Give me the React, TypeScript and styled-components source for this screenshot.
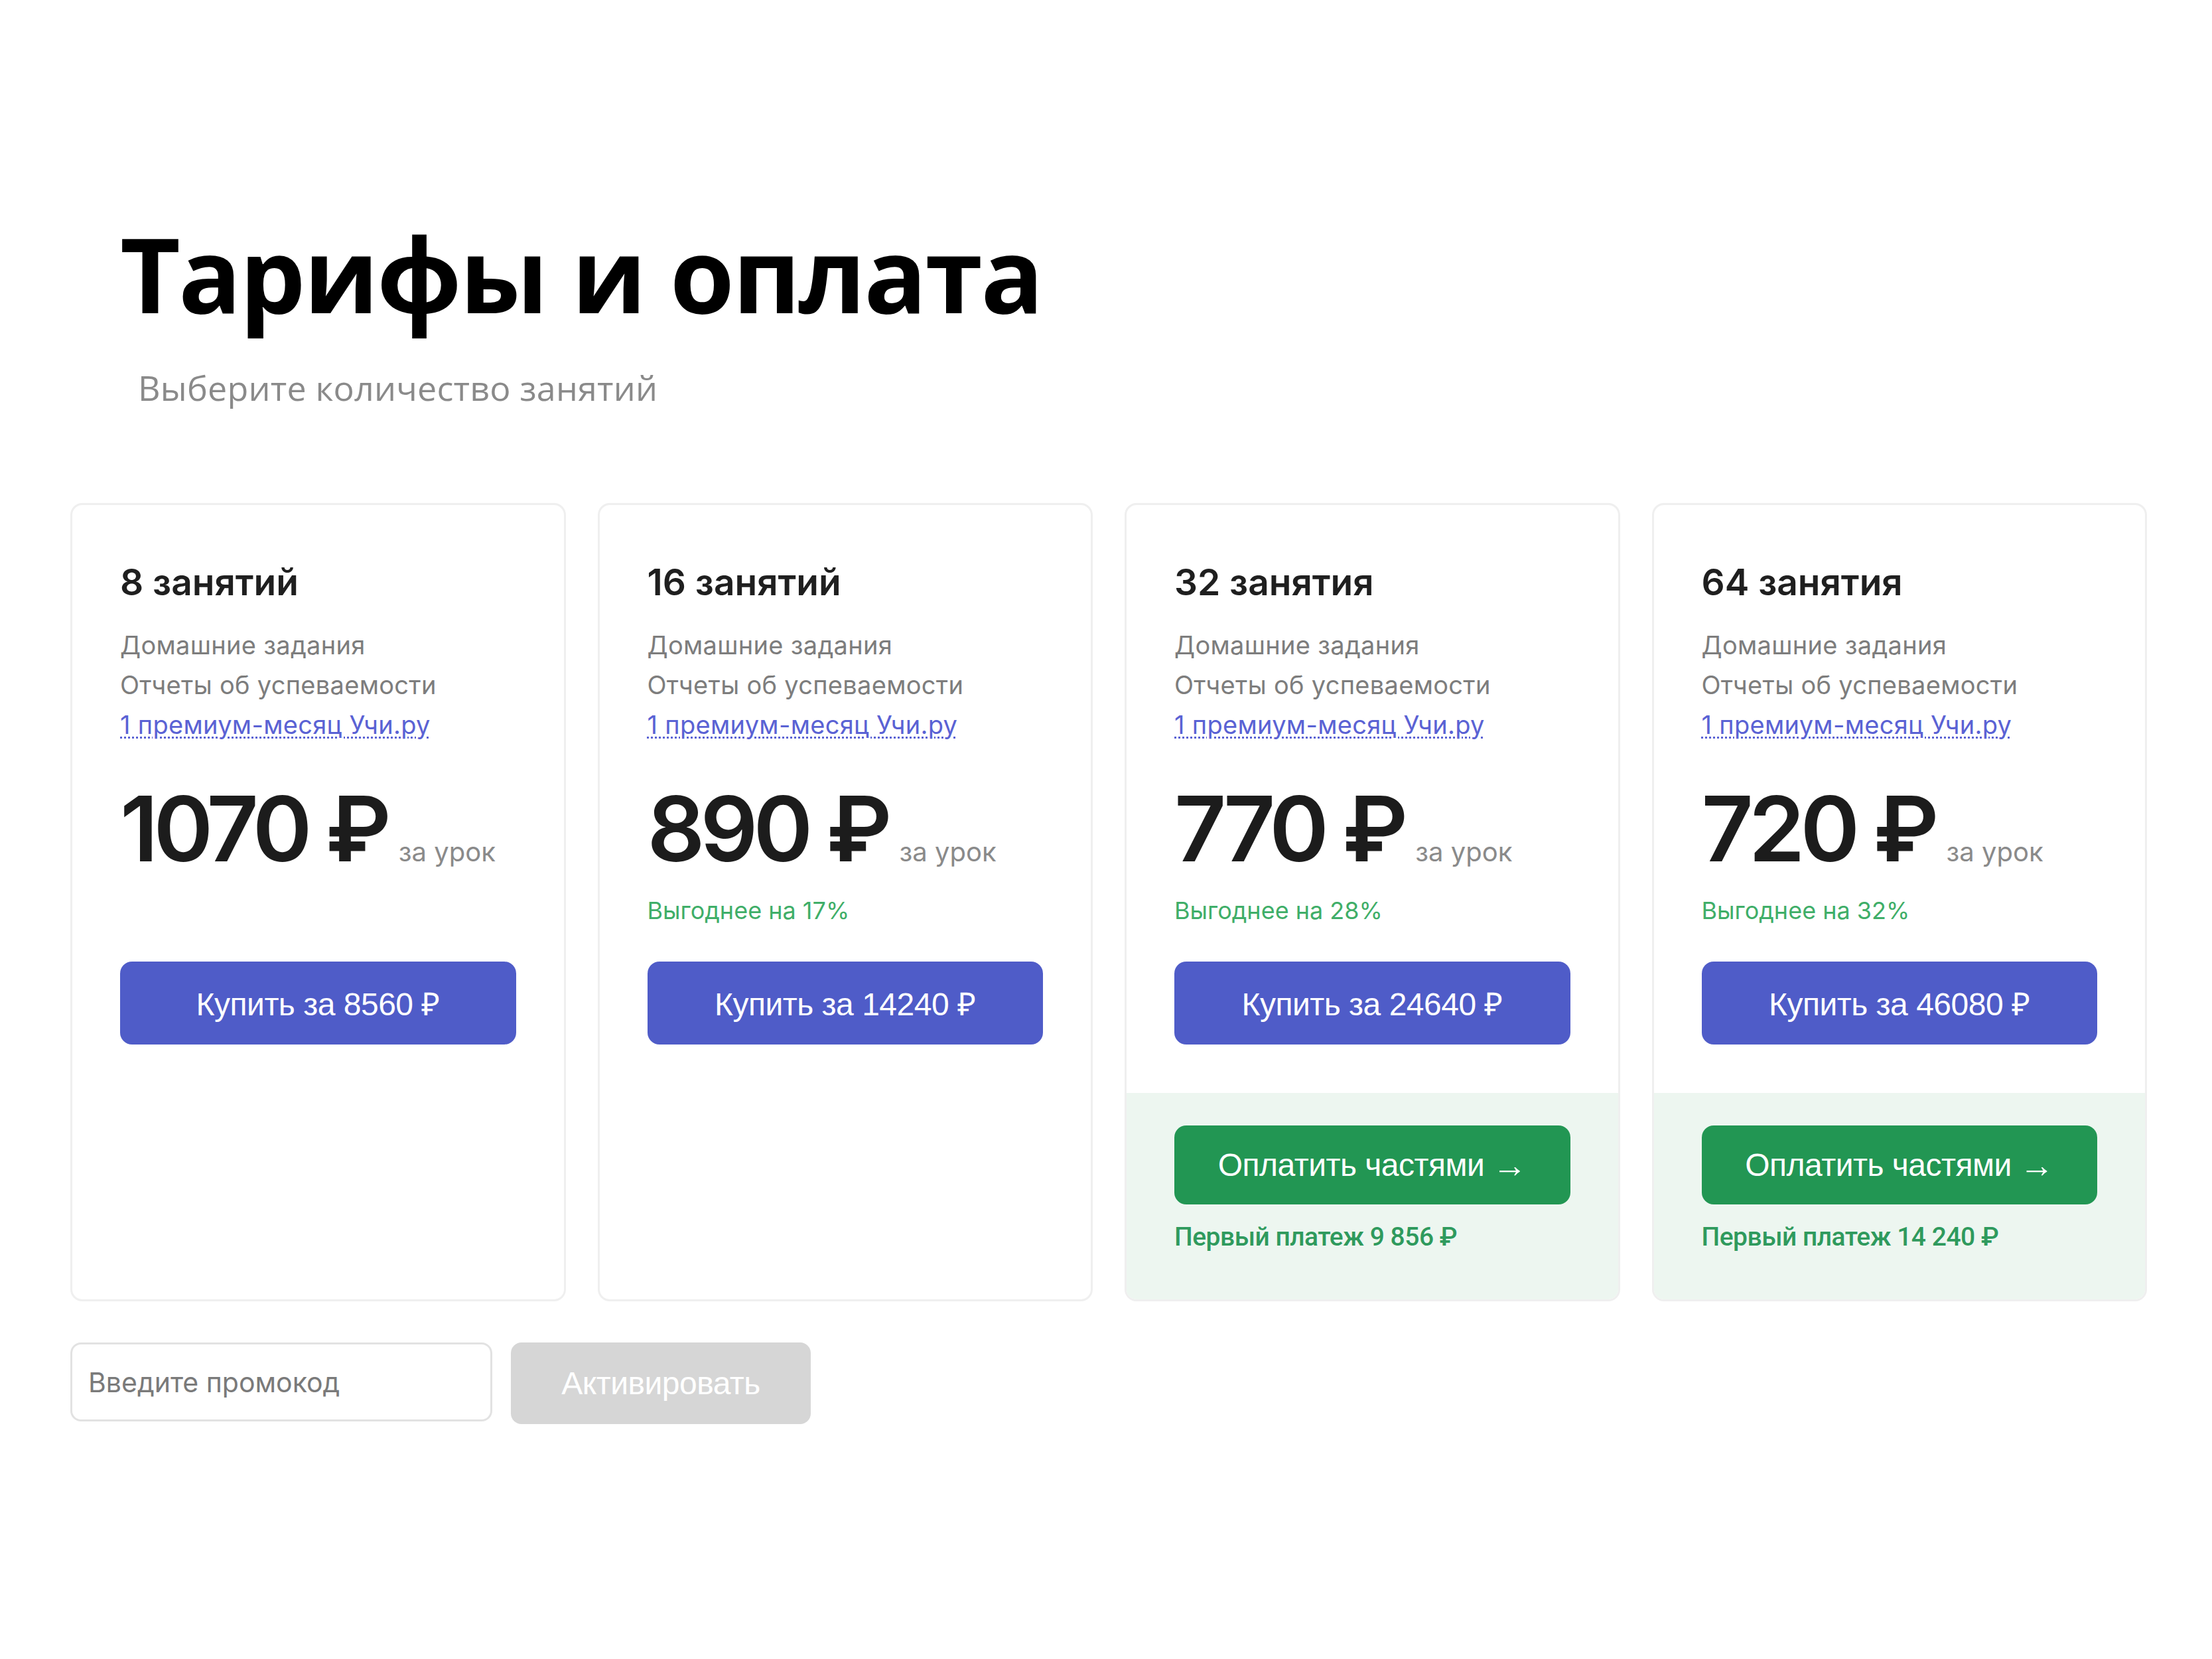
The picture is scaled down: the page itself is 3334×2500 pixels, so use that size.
import React from "react";
import styled, { createGlobalStyle } from "styled-components";

const GlobalStyle = createGlobalStyle`
  html, body {
    margin: 0;
    padding: 0;
    background: #ffffff;
  }
  * { box-sizing: border-box; }
`;

const Page = styled.main`
  padding: 333px 98px 200px 106px;
  font-family: "Inter", "Noto Sans", sans-serif;
`;

const Header = styled.header`
  display: flex;
  flex-direction: column;
`;

const Title = styled.h1`
  margin: 0 0 0 75px;
  font-family: "Open Sans", "Noto Sans", sans-serif;
  font-weight: 700;
  font-size: 157px;
  line-height: 1;
  color: #000;
  letter-spacing: -2.8px;
`;

const Subtitle = styled.p`
  margin: 68px 0 0 102px;
  font-family: "Open Sans", "Noto Sans", sans-serif;
  font-weight: 400;
  font-size: 52px;
  line-height: 1;
  color: #8a8a8a;
  letter-spacing: 0.2px;
`;

const Grid = styled.section`
  margin-top: 148px;
  display: grid;
  grid-template-columns: repeat(4, 1fr);
  gap: 48px;
  width: 3130px;
`;

const Card = styled.article`
  display: flex;
  flex-direction: column;
  border: 3px solid #efefef;
  border-radius: 18px;
  overflow: hidden;
  min-height: 1203px;
  background: #fff;
`;

const CardTop = styled.div`
  display: flex;
  flex-direction: column;
  padding: 84px 72px 73px;
`;

const CardTitle = styled.h2`
  margin: 0;
  font-family: "Inter", sans-serif;
  font-weight: 600;
  font-size: 55px;
  line-height: 65px;
  color: #1f1f1f;
  letter-spacing: 0;
`;

const Features = styled.ul`
  list-style: none;
  margin: 32px 0 0;
  padding: 0;
  display: flex;
  flex-direction: column;
`;

const Feature = styled.li`
  font-family: "Inter", sans-serif;
  font-size: 38px;
  line-height: 60px;
  color: #7d7d7d;
  letter-spacing: 0.3px;
  white-space: nowrap;
`;

const PremiumLink = styled.a`
  color: #5a62d4;
  text-decoration: underline dotted #5a62d4;
  text-decoration-thickness: 3px;
  text-underline-offset: 4px;
`;

const PriceRow = styled.div`
  margin-top: 59px;
  display: flex;
  align-items: baseline;
  gap: 18px;
`;

const Price = styled.span`
  font-family: "Inter", sans-serif;
  font-weight: 600;
  font-size: 136px;
  line-height: 1;
  color: #1c1c1c;
  letter-spacing: -7px;
`;

const PerLesson = styled.span`
  font-family: "Inter", sans-serif;
  font-size: 40px;
  color: #8a8a8a;
`;

const Saving = styled.div`
  margin-top: 33px;
  height: 44px;
  font-family: "Inter", sans-serif;
  font-size: 36px;
  line-height: 44px;
  color: #3fae68;
`;

const ActionButton = styled.button<{ $variant: "buy" | "parts" }>`
  display: flex;
  align-items: center;
  justify-content: center;
  width: 100%;
  height: ${(p) => (p.$variant === "buy" ? "125px" : "119px")};
  margin-top: ${(p) => (p.$variant === "buy" ? "55px" : "0")};
  border: none;
  border-radius: 18px;
  background: ${(p) => (p.$variant === "buy" ? "#4f5cc8" : "#229653")};
  color: #fff;
  font-family: "Liberation Sans", Arial, sans-serif;
  font-size: 48px;
  letter-spacing: -0.5px;
  cursor: pointer;
`;

const Arrow = styled.span`
  margin-left: 12px;
  font-size: 52px;
  line-height: 1;
`;

const Installments = styled.div`
  flex: 1;
  display: flex;
  flex-direction: column;
  padding: 49px 72px 60px;
  background: #edf6f0;
`;

const FirstPayment = styled.div`
  margin-top: 26px;
  font-family: "Roboto", "Liberation Sans", sans-serif;
  font-weight: 500;
  font-size: 39px;
  line-height: 46px;
  color: #2f9a5d;
  letter-spacing: -0.5px;
`;

const PromoRow = styled.form`
  margin-top: 62px;
  display: flex;
  gap: 28px;
  align-items: flex-start;
`;

const PromoInput = styled.input`
  width: 636px;
  height: 119px;
  padding: 0 24px;
  border: 3px solid #e2e2e2;
  border-radius: 16px;
  font-family: "Inter", sans-serif;
  font-size: 41px;
  color: #333;
  outline: none;
  &::placeholder {
    color: #7a7a7a;
  }
`;

const ActivateButton = styled.button`
  width: 452px;
  height: 123px;
  border: none;
  border-radius: 16px;
  background: #d6d6d6;
  color: #fff;
  font-family: "Liberation Sans", Arial, sans-serif;
  font-size: 48px;
  letter-spacing: -0.5px;
`;

type Plan = {
  title: string;
  price: string;
  saving?: string;
  total: string;
  firstPayment?: string;
};

const plans: Plan[] = [
  { title: "8 занятий", price: "1070 ₽", total: "8560" },
  { title: "16 занятий", price: "890 ₽", saving: "Выгоднее на 17%", total: "14240" },
  {
    title: "32 занятия",
    price: "770 ₽",
    saving: "Выгоднее на 28%",
    total: "24640",
    firstPayment: "9 856",
  },
  {
    title: "64 занятия",
    price: "720 ₽",
    saving: "Выгоднее на 32%",
    total: "46080",
    firstPayment: "14 240",
  },
];

function PlanCard({ plan }: { plan: Plan }) {
  return (
    <Card>
      <CardTop>
        <CardTitle>{plan.title}</CardTitle>
        <Features>
          <Feature>Домашние задания</Feature>
          <Feature>Отчеты об успеваемости</Feature>
          <Feature>
            <PremiumLink href="#">1 премиум-месяц Учи.ру</PremiumLink>
          </Feature>
        </Features>
        <PriceRow>
          <Price>{plan.price}</Price>
          <PerLesson>за урок</PerLesson>
        </PriceRow>
        <Saving>{plan.saving ?? ""}</Saving>
        <ActionButton $variant="buy" type="button">
          Купить за {plan.total} ₽
        </ActionButton>
      </CardTop>
      {plan.firstPayment && (
        <Installments>
          <ActionButton $variant="parts" type="button">
            Оплатить частями<Arrow>→</Arrow>
          </ActionButton>
          <FirstPayment>Первый платеж {plan.firstPayment} ₽</FirstPayment>
        </Installments>
      )}
    </Card>
  );
}

export default function App() {
  return (
    <>
      <GlobalStyle />
      <Page>
        <Header>
          <Title>Тарифы и оплата</Title>
          <Subtitle>Выберите количество занятий</Subtitle>
        </Header>
        <Grid>
          {plans.map((p) => (
            <PlanCard key={p.title} plan={p} />
          ))}
        </Grid>
        <PromoRow onSubmit={(e) => e.preventDefault()}>
          <PromoInput placeholder="Введите промокод" />
          <ActivateButton type="button">Активировать</ActivateButton>
        </PromoRow>
      </Page>
    </>
  );
}
